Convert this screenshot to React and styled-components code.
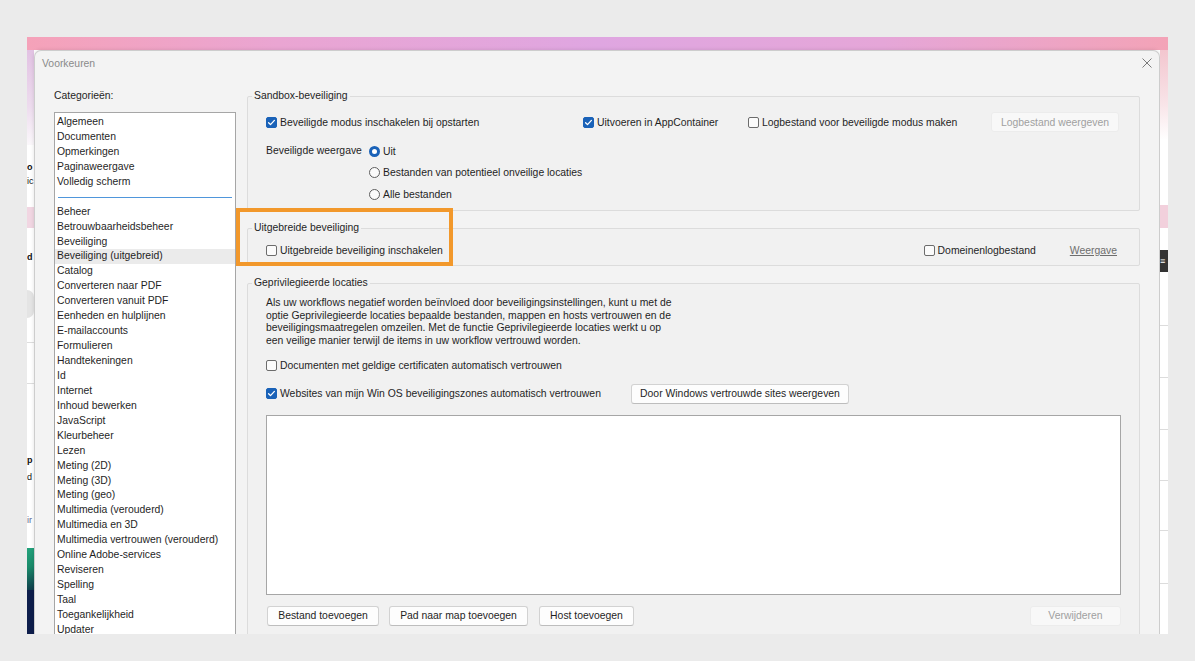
import styled, { createGlobalStyle } from 'styled-components'

const GlobalStyle = createGlobalStyle`
  * { box-sizing: border-box; }
  html, body { margin: 0; padding: 0; background: #ebebeb; }
  body {
    font-family: "Liberation Sans", Arial, sans-serif;
    font-size: 10.4px;
    color: #1f1f1f;
  }
`

const Page = styled.div`
  width: 1195px;
  height: 661px;
  padding: 37px 27px 0;
  overflow: hidden;
`

const Shot = styled.div`
  position: relative;
  width: 1141px;
  height: 597px;
  overflow: hidden;
  display: flex;
  flex-direction: column;
  background: #fff;
`

const TopBand = styled.div`
  flex: none;
  height: 13px;
  background: linear-gradient(90deg, #f5a2b9 0%, #eaa5d2 22%, #dfa6e1 50%, #e5a6d8 75%, #f3a3b7 100%);
`

const Stage = styled.div`
  flex: 1;
  display: flex;
  min-height: 0;
`

const Strip = styled.div`
  flex: none;
  width: ${p => p.$w}px;
  display: flex;
  flex-direction: column;
  overflow: hidden;
  background: #fff;
`

const Patch = styled.div`
  flex: none;
  height: ${p => p.$h}px;
  background: ${p => p.$bg || 'transparent'};
  color: ${p => p.$color || '#111'};
  font-size: 9px;
  font-weight: ${p => (p.$bold ? 700 : 400)};
  line-height: ${p => p.$h}px;
  white-space: nowrap;
  border-radius: ${p => p.$round || 0};
`

const Dialog = styled.section`
  flex: 1;
  min-width: 0;
  display: flex;
  flex-direction: column;
  background: #f3f3f3;
  border: 1px solid #cdcdcd;
  border-bottom: 0;
  border-radius: 7px 7px 0 0;
  box-shadow: 0 0 4px rgba(0, 0, 0, 0.12);
`

const TitleBar = styled.header`
  flex: none;
  height: 24px;
  display: flex;
  align-items: center;
  justify-content: space-between;
  padding: 0 7px;
  color: #8a8a8a;
`

const Body = styled.div`
  flex: 1;
  min-height: 0;
  display: flex;
  gap: 11px;
  padding: 15px 19px 0;
`

const LeftCol = styled.div`
  flex: none;
  width: 182px;
  display: flex;
  flex-direction: column;
`

const Caption = styled.div`
  line-height: 12px;
  margin-bottom: 10px;
`

const List = styled.ul`
  list-style: none;
  margin: 0;
  padding: 2px 0 0;
  flex: 1;
  background: #fff;
  border: 1px solid #a6a6a6;
  border-bottom: 0;
`

const Item = styled.li`
  height: 14.95px;
  line-height: 14.95px;
  padding-left: 2px;
  white-space: nowrap;
  background: ${p => (p.$active ? '#ebebeb' : 'transparent')};
`

const Divider = styled.li`
  height: 14.95px;
  display: flex;
  align-items: center;
  padding: 0 3px;
  &::after {
    content: '';
    flex: 1;
    height: 1px;
    background: #4f96db;
  }
`

const RightCol = styled.div`
  flex: 1;
  min-width: 0;
  display: flex;
  flex-direction: column;
  gap: 11px;
`

const Group = styled.fieldset`
  margin: 0;
  min-width: 0;
  border: 1px solid #dcdcdc;
  border-radius: 2px;
  background: #f1f1f1;
  padding: ${p => p.$pad};
`

const Legend = styled.legend`
  padding: 0 2px;
  margin-left: -14px;
  line-height: 12px;
`

const TopRow = styled.div`
  display: grid;
  grid-template-columns: 317px 165px 1fr 128px;
  align-items: center;
  height: 20px;
`

const ViewBlock = styled.div`
  display: grid;
  grid-template-columns: 103px 1fr;
  margin-top: 12px;
`

const ViewLabel = styled.div`
  line-height: 14px;
`

const RadioList = styled.div`
  display: flex;
  flex-direction: column;
  gap: 7.5px;
`

const Row = styled.div`
  display: flex;
  align-items: center;
  height: ${p => p.$h || 14}px;
  margin-top: ${p => p.$mt || 0}px;
`

const Option = styled.label`
  display: inline-flex;
  align-items: center;
  gap: 3px;
  height: 14px;
  white-space: nowrap;
  flex: none;
  width: ${p => (p.$w ? `${p.$w}px` : 'auto')};
`

const Box = styled.span`
  flex: none;
  width: 11px;
  height: 11px;
  border-radius: 2px;
  display: inline-flex;
  align-items: center;
  justify-content: center;
  background: ${p => (p.$on ? '#1a62b8' : '#fbfbfb')};
  border: 1px solid ${p => (p.$on ? '#1a62b8' : '#6c6c6c')};
`

const Dot = styled.span`
  flex: none;
  width: 11px;
  height: 11px;
  border-radius: 50%;
  background: ${p => (p.$on ? '#fff' : '#fbfbfb')};
  border: ${p => (p.$on ? '3.5px solid #1a62b8' : '1px solid #5e5e5e')};
`

const Button = styled.button`
  flex: none;
  width: ${p => p.$w}px;
  height: 20px;
  padding: 0;
  font: inherit;
  color: ${p => (p.disabled ? '#a0a0a0' : '#1f1f1f')};
  background: ${p => (p.disabled ? '#f8f8f8' : '#fdfdfd')};
  border: 1px solid ${p => (p.disabled ? '#ececec' : '#d2d2d2')};
  border-bottom-color: ${p => (p.disabled ? '#ececec' : '#bdbdbd')};
  border-radius: 3px;
  margin-left: ${p => p.$ml || 0}px;
`

const Spacer = styled.div`
  flex: 1;
`

const LinkText = styled.span`
  color: #6e6e6e;
  text-decoration: underline;
  margin-left: 34px;
`

const Para = styled.p`
  margin: 0;
  line-height: 12.7px;
  white-space: nowrap;
`

const WhiteBox = styled.div`
  height: 180px;
  margin-top: 11px;
  background: #fff;
  border: 1px solid #a6a6a6;
`

const ButtonRow = styled.div`
  display: flex;
  gap: 10px;
  margin-top: 11px;
  padding-left: 1px;
`

const Highlight = styled.div`
  position: absolute;
  left: 209px;
  top: 171px;
  width: 217px;
  height: 58px;
  border: 4px solid #f2982b;
  pointer-events: none;
`

const Tick = () => (
  <svg width="9" height="9" viewBox="0 0 9 9">
    <path d="M1.6 4.7 L3.5 6.6 L7.4 2.4" fill="none" stroke="#fff" strokeWidth="1.3" strokeLinecap="round" strokeLinejoin="round" />
  </svg>
)

const Check = ({ on, w, children }) => (
  <Option $w={w}>
    <Box $on={on}>{on && <Tick />}</Box>
    {children}
  </Option>
)

const Radio = ({ on, children }) => (
  <Option>
    <Dot $on={on} />
    {children}
  </Option>
)

const topCats = ['Algemeen', 'Documenten', 'Opmerkingen', 'Paginaweergave', 'Volledig scherm']
const cats = [
  'Beheer', 'Betrouwbaarheidsbeheer', 'Beveiliging', 'Beveiliging (uitgebreid)', 'Catalog',
  'Converteren naar PDF', 'Converteren vanuit PDF', 'Eenheden en hulplijnen', 'E-mailaccounts',
  'Formulieren', 'Handtekeningen', 'Id', 'Internet', 'Inhoud bewerken', 'JavaScript', 'Kleurbeheer',
  'Lezen', 'Meting (2D)', 'Meting (3D)', 'Meting (geo)', 'Multimedia (verouderd)', 'Multimedia en 3D',
  'Multimedia vertrouwen (verouderd)', 'Online Adobe-services', 'Reviseren', 'Spelling', 'Taal',
  'Toegankelijkheid', 'Updater',
]

// stukjes van de app achter het dialoogvenster
const leftBits = [
  { h: 95, bg: 'linear-gradient(180deg,#e2c2e3 0%,#eddcee 60%,#fbf8fb 100%)' },
  { h: 15 },
  { h: 14, text: 'o', bold: true },
  { h: 14, text: 'ic' },
  { h: 19 },
  { h: 21, bg: '#f1d6e2' },
  { h: 20 },
  { h: 18, text: 'd', bold: true },
  { h: 24 },
  { h: 28, bg: '#e4e4e4', round: '0 14px 14px 0' },
  { h: 24 },
  { h: 1, bg: '#dedede' },
  { h: 40 },
  { h: 1, bg: '#dedede' },
  { h: 68 },
  { h: 16, text: 'p', bold: true },
  { h: 18, text: 'd' },
  { h: 26 },
  { h: 16, text: 'ir', color: '#5a6690' },
  { h: 20 },
  { h: 42, bg: 'linear-gradient(160deg,#23a37c 0%,#1a8a6a 45%,#0f3a4a 100%)' },
  { h: 44, bg: '#0d1d4b' },
]

const rightBits = [
  { h: 90, bg: 'linear-gradient(180deg,#f3c6cf 0%,#f8e4e8 60%,#fff 100%)' },
  { h: 65 },
  { h: 23, bg: '#f2d0dc' },
  { h: 22 },
  { h: 22, bg: '#333', text: '≡', color: '#fff' },
  { h: 53 }, { h: 1, bg: '#dcdcdc' },
  { h: 51 }, { h: 1, bg: '#dcdcdc' },
  { h: 51 }, { h: 1, bg: '#dcdcdc' },
  { h: 50 }, { h: 1, bg: '#dcdcdc' },
  { h: 49 }, { h: 1, bg: '#dcdcdc' },
  { h: 52 }, { h: 1, bg: '#dcdcdc' },
  { h: 50 },
]

const Bits = ({ list }) =>
  list.map((b, i) => (
    <Patch key={i} $h={b.h} $bg={b.bg} $bold={b.bold} $color={b.color} $round={b.round}>
      {b.text}
    </Patch>
  ))

export default function App() {
  return (
    <>
      <GlobalStyle />
      <Page>
        <Shot>
          <TopBand />
          <Stage>
            <Strip $w={7}>
              <Bits list={leftBits} />
            </Strip>

            <Dialog>
              <TitleBar>
                <span>Voorkeuren</span>
                <svg width="10" height="10" viewBox="0 0 10 10">
                  <path d="M0.5 0.5 L9.5 9.5 M9.5 0.5 L0.5 9.5" stroke="#7a7a7a" strokeWidth="1" />
                </svg>
              </TitleBar>

              <Body>
                <LeftCol>
                  <Caption>Categorieën:</Caption>
                  <List>
                    {topCats.map(c => (
                      <Item key={c}>{c}</Item>
                    ))}
                    <Divider />
                    {cats.map(c => (
                      <Item key={c} $active={c === 'Beveiliging (uitgebreid)'}>{c}</Item>
                    ))}
                  </List>
                </LeftCol>

                <RightCol>
                  <Group $pad="10px 20px 9px 18px">
                    <Legend>Sandbox-beveiliging</Legend>
                    <TopRow>
                      <Check on>Beveiligde modus inschakelen bij opstarten</Check>
                      <Check on>Uitvoeren in AppContainer</Check>
                      <Check>Logbestand voor beveiligde modus maken</Check>
                      <Button $w={128} disabled>Logbestand weergeven</Button>
                    </TopRow>
                    <ViewBlock>
                      <ViewLabel>Beveiligde weergave</ViewLabel>
                      <RadioList>
                        <Radio on>Uit</Radio>
                        <Radio>Bestanden van potentieel onveilige locaties</Radio>
                        <Radio>Alle bestanden</Radio>
                      </RadioList>
                    </ViewBlock>
                  </Group>

                  <Group $pad="9px 22px 8px 18px">
                    <Legend>Uitgebreide beveiliging</Legend>
                    <Row>
                      <Check>Uitgebreide beveiliging inschakelen</Check>
                      <Spacer />
                      <Check>Domeinenlogbestand</Check>
                      <LinkText>Weergave</LinkText>
                    </Row>
                  </Group>

                  <Group $pad="8px 18px 10px 18px">
                    <Legend>Geprivilegieerde locaties</Legend>
                    <Para>
                      Als uw workflows negatief worden beïnvloed door beveiligingsinstellingen, kunt u met de
                      <br />
                      optie Geprivilegieerde locaties bepaalde bestanden, mappen en hosts vertrouwen en de
                      <br />
                      beveiligingsmaatregelen omzeilen. Met de functie Geprivilegieerde locaties werkt u op
                      <br />
                      een veilige manier terwijl de items in uw workflow vertrouwd worden.
                    </Para>
                    <Row $mt={11}>
                      <Check>Documenten met geldige certificaten automatisch vertrouwen</Check>
                    </Row>
                    <Row $mt={11} $h={20}>
                      <Check on w={365}>Websites van mijn Win OS beveiligingszones automatisch vertrouwen</Check>
                      <Button $w={218}>Door Windows vertrouwde sites weergeven</Button>
                    </Row>
                    <WhiteBox />
                    <ButtonRow>
                      <Button $w={112}>Bestand toevoegen</Button>
                      <Button $w={139}>Pad naar map toevoegen</Button>
                      <Button $w={95} $ml={1}>Host toevoegen</Button>
                      <Spacer />
                      <Button $w={91} disabled>Verwijderen</Button>
                    </ButtonRow>
                  </Group>
                </RightCol>
              </Body>
            </Dialog>

            <Strip $w={8}>
              <Bits list={rightBits} />
            </Strip>
          </Stage>
          <Highlight />
        </Shot>
      </Page>
    </>
  )
}
